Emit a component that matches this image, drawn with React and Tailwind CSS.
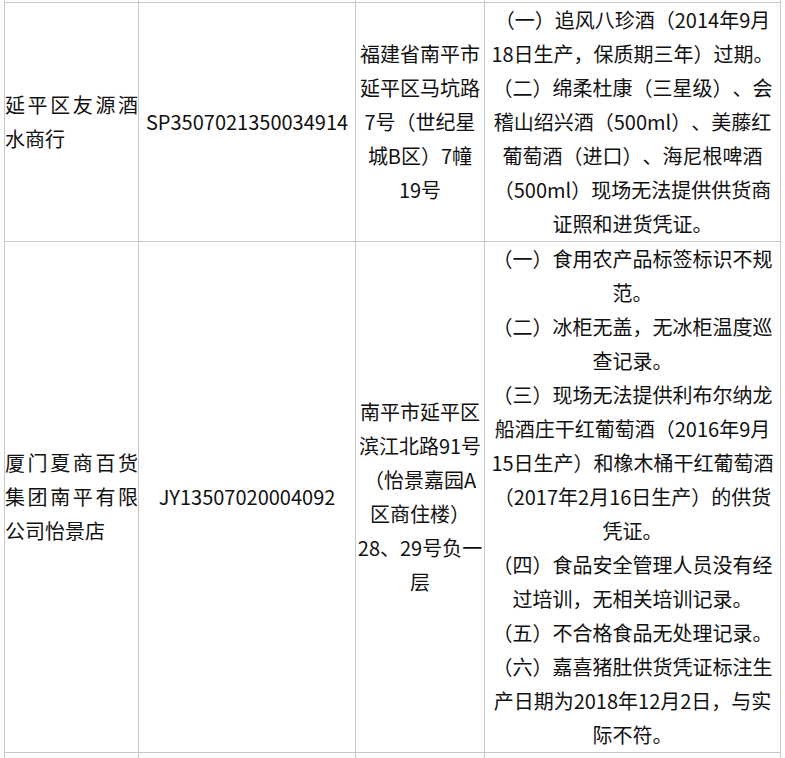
import React from 'react';

const rows = [
  {
    name: '延平区友源酒水商行',
    license: 'SP3507021350034914',
    address: ['福建省南平市', '延平区马坑路', '7号（世纪星', '城B区）7幢', '19号'],
    issues: [
      '（一）追风八珍酒（2014年9月',
      '18日生产，保质期三年）过期。',
      '（二）绵柔杜康（三星级）、会',
      '稽山绍兴酒（500ml）、美藤红',
      '葡萄酒（进口）、海尼根啤酒',
      '（500ml）现场无法提供供货商',
      '证照和进货凭证。',
    ],
  },
  {
    name: '厦门夏商百货集团南平有限公司怡景店',
    license: 'JY13507020004092',
    address: ['南平市延平区', '滨江北路91号', '（怡景嘉园A', '区商住楼）', '28、29号负一', '层'],
    issues: [
      '（一）食用农产品标签标识不规',
      '范。',
      '（二）冰柜无盖，无冰柜温度巡',
      '查记录。',
      '（三）现场无法提供利布尔纳龙',
      '船酒庄干红葡萄酒（2016年9月',
      '15日生产）和橡木桶干红葡萄酒',
      '（2017年2月16日生产）的供货',
      '凭证。',
      '（四）食品安全管理人员没有经',
      '过培训，无相关培训记录。',
      '（五）不合格食品无处理记录。',
      '（六）嘉喜猪肚供货凭证标注生',
      '产日期为2018年12月2日，与实',
      '际不符。',
    ],
  },
];

const cell = 'border-r border-b border-[#c8c8c8]';

function App() {
  return (
    <div
      lang="zh-CN"
      className="h-[758px] overflow-hidden bg-white pl-[4px] font-['Noto_Sans_CJK_SC',sans-serif] text-[20px] leading-[34px] text-[#111] [text-spacing-trim:space-all]"
    >
      <div className="grid w-fit grid-cols-[134px_217px_129px_296px] border-l border-[#c8c8c8]">
        {/* tail of the row above */}
        <div className={`${cell} h-[3px]`} />
        <div className={`${cell} h-[3px]`} />
        <div className={`${cell} h-[3px]`} />
        <div className={`${cell} h-[3px]`} />

        {rows.map((row) => (
          <React.Fragment key={row.license}>
            <div className={`${cell} flex items-center`}>
              <div className="w-full text-justify">{row.name}</div>
            </div>
            <div className={`${cell} flex items-center justify-center text-center`}>
              {row.license}
            </div>
            <div className={`${cell} flex flex-col items-center justify-center whitespace-nowrap text-center`}>
              {row.address.map((line) => (
                <div key={line}>{line}</div>
              ))}
            </div>
            <div className={`${cell} flex flex-col items-center justify-center whitespace-nowrap text-center`}>
              {row.issues.map((line) => (
                <div key={line}>{line}</div>
              ))}
            </div>
          </React.Fragment>
        ))}

        {/* start of the next row */}
        <div className="h-[20px] border-r border-[#c8c8c8]" />
        <div className="h-[20px] border-r border-[#c8c8c8]" />
        <div className="h-[20px] border-r border-[#c8c8c8]" />
        <div className="h-[20px] border-r border-[#c8c8c8]" />
      </div>
    </div>
  );
}

export default App;
